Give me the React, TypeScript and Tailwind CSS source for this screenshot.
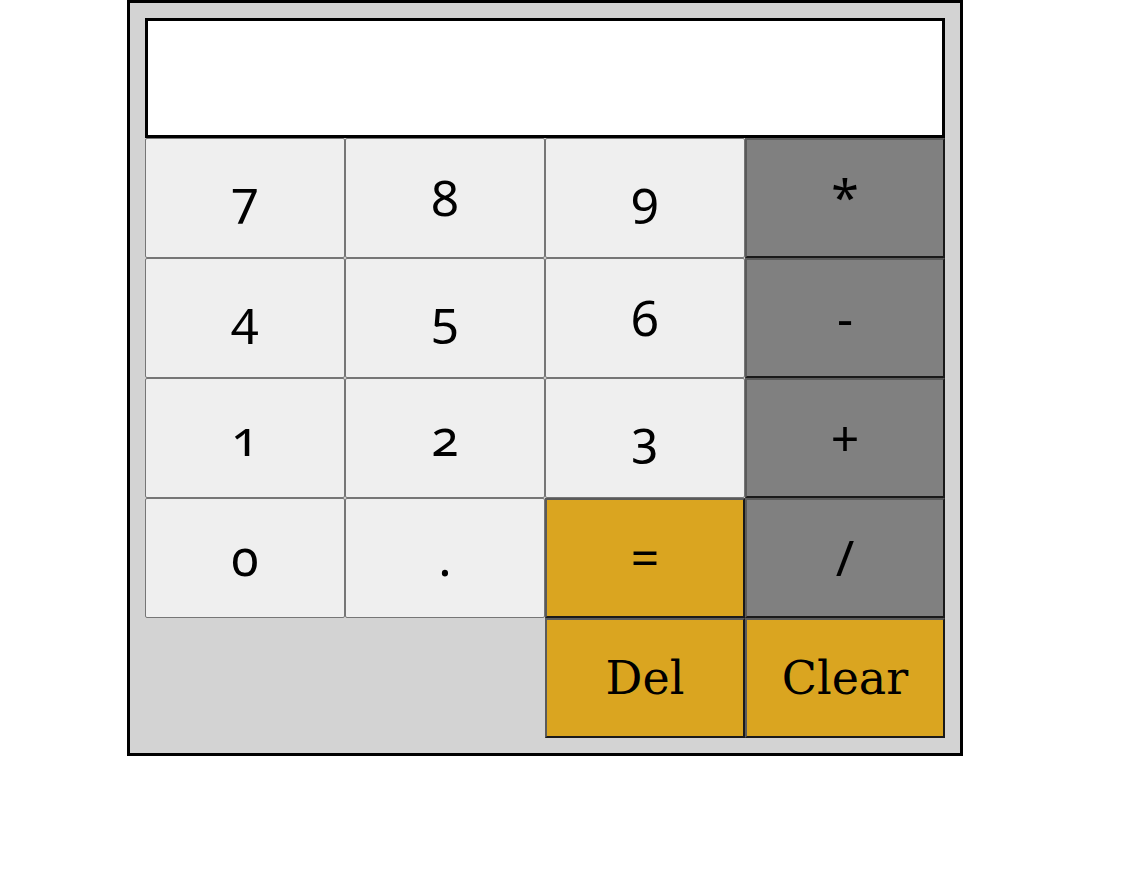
import React from "react";

const light = "h-[120px] bg-[#efefef] border border-[#767676] rounded-[2px] flex items-center justify-center";
const op = "h-[120px] bg-[#808080] border-2 border-t-[#5a5a5a] border-l-[#5a5a5a] border-r-[#1a1a1a] border-b-[#1a1a1a] flex items-center justify-center";
const gold = "h-[120px] bg-[#daa520] border-2 border-t-[#5a5a5a] border-l-[#5a5a5a] border-r-[#1a1a1a] border-b-[#1a1a1a] flex items-center justify-center";

export default function App() {
  const keys: [string, string][] = [
    ["7", light], ["8", light], ["9", light], ["*", op],
    ["4", light], ["5", light], ["6", light], ["-", op],
    ["1", light], ["2", light], ["3", light], ["+", op],
    ["0", light], [".", light], ["=", gold], ["/", op],
  ];
  return (
    <div className="bg-white min-h-[896px]">
      <div className="ml-[127px] w-[836px] border-[3px] border-black bg-[#d3d3d3] p-[15px]">
        <div className="h-[120px] border-[3px] border-black bg-white" />
        <div className="grid grid-cols-4 text-black">
          {keys.map(([t, c], i) => (
            <button
              key={i}
              className={`${c} pb-[3px] font-['Noto_Sans',sans-serif] text-[50px] leading-none [font-variant-numeric:oldstyle-nums]`}
            >
              {t}
            </button>
          ))}
          <div />
          <div />
          <button className={`${gold} font-['DejaVu_Serif',serif] text-[46px] leading-none`}>Del</button>
          <button className={`${gold} font-['DejaVu_Serif',serif] text-[46px] leading-none`}>Clear</button>
        </div>
      </div>
    </div>
  );
}
